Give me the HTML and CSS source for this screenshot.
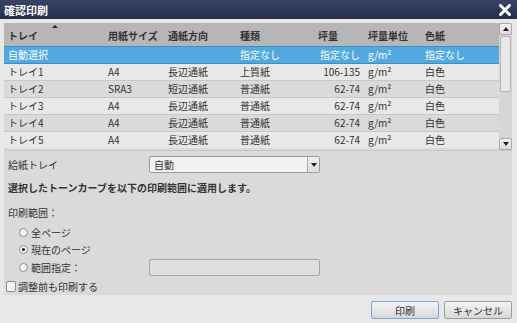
FILE: index.html
```html
<!DOCTYPE html>
<html lang="ja">
<head>
    <meta charset="UTF-8">
    <title>確認印刷</title>
    <link rel="stylesheet" href="styles.css">
</head>
<body>
    <div class="dialog">
        <div class="titlebar">
            <span class="title">確認印刷</span>
            <svg class="close" width="12" height="12" viewBox="0 0 12 12">
                <path d="M1.5 1.5 L10.5 10.5 M10.5 1.5 L1.5 10.5" stroke="#fff" stroke-width="3" stroke-linecap="square"/>
            </svg>
        </div>

        <div class="panel">
            <div class="list">
                <table class="tray-table">
                    <colgroup>
                        <col style="width:100px">
                        <col style="width:60px">
                        <col style="width:72px">
                        <col style="width:78px">
                        <col style="width:50px">
                        <col style="width:57px">
                        <col>
                    </colgroup>
                    <thead>
                        <tr>
                            <th class="sorted">トレイ<span class="sort-arrow"></span></th>
                            <th>用紙サイズ</th>
                            <th>通紙方向</th>
                            <th>種類</th>
                            <th>坪量</th>
                            <th>坪量単位</th>
                            <th>色紙</th>
                        </tr>
                    </thead>
                    <tbody>
                        <tr class="selected">
                            <td>自動選択</td><td></td><td></td><td>指定なし</td><td class="num">指定なし</td><td>g/m²</td><td>指定なし</td>
                        </tr>
                        <tr>
                            <td>トレイ1</td><td>A4</td><td>長辺通紙</td><td>上質紙</td><td class="num">106-135</td><td>g/m²</td><td>白色</td>
                        </tr>
                        <tr class="alt">
                            <td>トレイ2</td><td>SRA3</td><td>短辺通紙</td><td>普通紙</td><td class="num">62-74</td><td>g/m²</td><td>白色</td>
                        </tr>
                        <tr>
                            <td>トレイ3</td><td>A4</td><td>長辺通紙</td><td>普通紙</td><td class="num">62-74</td><td>g/m²</td><td>白色</td>
                        </tr>
                        <tr class="alt">
                            <td>トレイ4</td><td>A4</td><td>長辺通紙</td><td>普通紙</td><td class="num">62-74</td><td>g/m²</td><td>白色</td>
                        </tr>
                        <tr>
                            <td>トレイ5</td><td>A4</td><td>長辺通紙</td><td>普通紙</td><td class="num">62-74</td><td>g/m²</td><td>白色</td>
                        </tr>
                    </tbody>
                </table>
                <div class="scrollbar">
                    <div class="scroll-btn"><span class="tri up"></span></div>
                    <div class="scroll-track"><div class="scroll-thumb"></div></div>
                    <div class="scroll-btn"><span class="tri down"></span></div>
                </div>
            </div>

            <div class="form">
                <div class="form-row">
                    <span class="label">給紙トレイ</span>
                    <div class="select">
                        <span class="select-value">自動</span>
                        <span class="select-btn"><span class="tri down"></span></span>
                    </div>
                </div>
                <p class="note">選択したトーンカーブを以下の印刷範囲に適用します。</p>
                <p class="range-label">印刷範囲：</p>
                <div class="radio-list">
                    <label class="radio"><span class="radio-dot"></span>全ページ</label>
                    <label class="radio"><span class="radio-dot checked"></span>現在のページ</label>
                    <div class="form-row range-row">
                        <label class="radio"><span class="radio-dot"></span>範囲指定：</label>
                        <span class="textbox"></span>
                    </div>
                </div>
                <label class="check"><span class="check-box"></span>調整前も印刷する</label>
            </div>
        </div>

        <div class="footer">
            <button class="btn focused">印刷</button>
            <button class="btn">キャンセル</button>
        </div>
    </div>
</body>
</html>
```

FILE: styles.css
```css
body {
    margin: 0;
    font-family: "Noto Sans CJK JP", "Open Sans", sans-serif;
    font-size: 10px;
    color: #333;
    background-color: #e8e8e8;
}

.dialog {
    width: 517px;
    height: 323px;
    display: flex;
    flex-direction: column;
    background-color: #e8e8e8;
    overflow: hidden;
}

.titlebar {
    height: 19px;
    flex: none;
    display: flex;
    align-items: center;
    justify-content: space-between;
    padding: 0 6px 0 4px;
    background: linear-gradient(#394365, #252d49);
    color: #fff;
}

.title {
    font-size: 11px;
    font-weight: bold;
}

.close {
    display: block;
}

.panel {
    margin: 4px 5px 0 4px;
    height: 272px;
    background-color: #dadada;
    display: flex;
    flex-direction: column;
}

.list {
    display: flex;
    height: 127px;
    border-bottom: 1px solid #c6c6c6;
}

.tray-table {
    width: 495px;
    table-layout: fixed;
    border-collapse: collapse;
    align-self: flex-start;
}

.tray-table th,
.tray-table td {
    text-align: left;
    padding: 0 0 0 4px;
    white-space: nowrap;
    line-height: 14px;
}

.tray-table th {
    height: 21px;
    background-color: #b6b6b6;
    font-weight: bold;
    position: relative;
    padding-top: 2px;
}

.sort-arrow {
    position: absolute;
    left: 48px;
    top: 2px;
    border-left: 3px solid transparent;
    border-right: 3px solid transparent;
    border-bottom: 3px solid #222;
}

.tray-table td {
    height: 16px;
    background-color: #e8e8e8;
    border-top: 1px solid #c8c8c8;
}

.tray-table tr.alt td {
    background-color: #dadada;
}

.tray-table td.num {
    text-align: right;
    padding: 0 4px 0 0;
}

.tray-table tr.selected td {
    background-color: #52a9de;
    color: #fff;
    border-top: 1px solid #3c8fc6;
    border-bottom: 1px solid #3c8fc6;
}

.scrollbar {
    width: 13px;
    display: flex;
    flex-direction: column;
    background-color: #d6d6d6;
}

.scroll-btn {
    height: 12px;
    flex: none;
    display: flex;
    align-items: center;
    justify-content: center;
    border: 1px solid #a8a8a8;
    border-radius: 2px;
    background: linear-gradient(#f2f2f2, #dcdcdc);
    box-sizing: border-box;
}

.scroll-track {
    flex: 1;
    padding: 1px 1px;
}

.scroll-thumb {
    height: 54px;
    border: 1px solid #b4b4b4;
    border-radius: 2px;
    background-color: #e8e8e8;
}

.tri {
    border-left: 3px solid transparent;
    border-right: 3px solid transparent;
}

.tri.up {
    border-bottom: 4px solid #222;
}

.tri.down {
    border-top: 4px solid #222;
}

.form {
    padding: 5px 0 0 4px;
}

.form-row {
    display: grid;
    grid-template-columns: 141px 171px;
    align-items: center;
}

.select {
    height: 17px;
    display: flex;
    box-sizing: border-box;
    border: 1px solid #9c9c9c;
    border-radius: 2px;
    background-color: #f2f2f2;
}

.select-value {
    flex: 1;
    padding-left: 4px;
    line-height: 15px;
}

.select-btn {
    width: 11px;
    display: flex;
    align-items: center;
    justify-content: center;
    border-left: 1px solid #a8a8a8;
    background: linear-gradient(#f2f2f2, #dcdcdc);
}

.note {
    margin: 8px 0 0;
    font-weight: bold;
    line-height: 14px;
}

.range-label {
    margin: 11px 0 0;
    line-height: 14px;
}

.radio-list {
    margin-top: 5px;
    display: flex;
    flex-direction: column;
    gap: 3px;
}

.radio {
    display: flex;
    align-items: center;
    height: 14px;
    padding-left: 11px;
}

.radio-dot {
    width: 9px;
    height: 9px;
    margin-right: 3px;
    box-sizing: border-box;
    border: 1px solid #8c8c8c;
    border-radius: 50%;
    background-color: #f4f4f4;
    display: flex;
    align-items: center;
    justify-content: center;
}

.radio-dot.checked::after {
    content: "";
    width: 3px;
    height: 3px;
    border-radius: 50%;
    background-color: #111;
}

.textbox {
    height: 17px;
    box-sizing: border-box;
    border: 1px solid #a4a4a4;
    border-radius: 2px;
    background-color: #dedede;
}

.check {
    display: flex;
    align-items: center;
    margin: 3px 0 0 -2px;
    height: 14px;
}

.check-box {
    width: 10px;
    height: 11px;
    margin-right: 2px;
    box-sizing: border-box;
    border: 1px solid #8c8c8c;
    border-radius: 2px;
    background-color: #f4f4f4;
}

.footer {
    display: flex;
    justify-content: flex-end;
    gap: 5px;
    padding: 6px 5px 0 0;
}

.btn {
    width: 68px;
    height: 18px;
    padding: 0;
    font-family: "Noto Sans CJK JP", "Open Sans", sans-serif;
    font-size: 10px;
    color: #333;
    border: 1px solid #9c9c9c;
    border-radius: 2px;
    background: linear-gradient(#f4f4f4, #d8d8d8);
}

.btn.focused {
    border-color: #7ea3dc;
}
```
